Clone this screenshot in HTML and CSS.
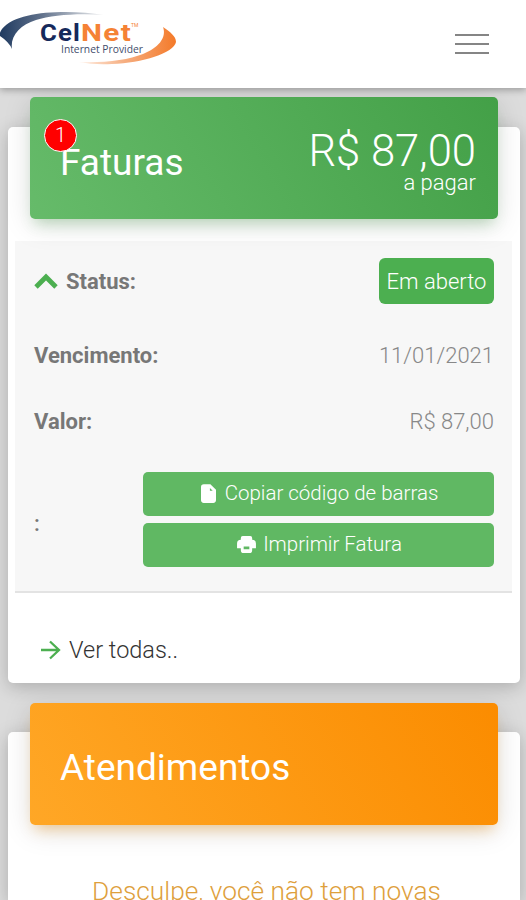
FILE: index.html
```
<!DOCTYPE html>
<html lang="pt-BR">
<head>
<meta charset="utf-8">
<title>CelNet</title>
<link rel="stylesheet" href="styles.css">
</head>
<body>
<header class="navbar">
  <svg class="logo" viewBox="0 0 190 70" role="img" aria-label="CelNet Internet Provider">
    <defs>
      <linearGradient id="navy" x1="0" x2="1"><stop offset="0" stop-color="#1f3a60"/><stop offset=".4" stop-color="#60718b"/><stop offset="1" stop-color="#f2f2f2"/></linearGradient>
      <linearGradient id="orange" x1="0" x2="1"><stop offset="0" stop-color="#fff0e6"/><stop offset=".45" stop-color="#f6b084"/><stop offset="1" stop-color="#f47a29"/></linearGradient>
    </defs>
    <path fill="url(#navy)" d="M12 49Q9 42 0 36Q-1 33 2 29C13 16 38 12 66 12Q86 12 104 15C78 13 52 15 36 20C20 25 10 36 12 49Z"/>
    <path fill="url(#orange)" d="M163 27C170 32 176 36 176 42C174 53 142 63 112 64Q94 65 79 62C105 63 128 60 143 54C158 48 167 38 163 27Z"/>
    <g class="brand">
      <text x="40" y="41" textLength="41" lengthAdjust="spacingAndGlyphs" fill="#15295b">Cel</text>
      <text x="81" y="41" textLength="51" lengthAdjust="spacingAndGlyphs" fill="#f58235">Net</text>
    </g>
    <text class="tm" x="131" y="27">TM</text>
    <text class="tagline" x="61" y="53" textLength="82" lengthAdjust="spacingAndGlyphs">Internet Provider</text>
  </svg>
  <button class="menu" aria-label="Menu"><span></span><span></span><span></span></button>
</header>
<main>
  <section class="card invoices">
    <div class="card-header green">
      <span class="badge">1</span>
      <h2>Faturas</h2>
      <div class="total"><strong>R$ 87,00</strong><span>a pagar</span></div>
    </div>
    <div class="details">
      <div class="row status">
        <b><svg class="chevron" viewBox="0 0 24 16"><path d="M2 14 12 4 22 14" fill="none" stroke="#4caf50" stroke-width="4.800"/></svg>Status:</b>
        <span class="tag">Em aberto</span>
      </div>
      <div class="row due"><b>Vencimento:</b><span class="date">11/01/2021</span></div>
      <div class="row value"><b>Valor:</b><span>R$ 87,00</span></div>
      <div class="row actions">
        <b>:</b>
        <div class="buttons">
          <button class="btn"><svg class="file" viewBox="0 0 16 20"><path fill="#fff" fill-rule="evenodd" d="M3 0H10L16 6V17Q16 20 13 20H3Q0 20 0 17V3Q0 0 3 0ZM9.500 4V7H12.500Z"/></svg><span>Copiar código de barras</span></button>
          <button class="btn"><svg class="printer" viewBox="0 0 20 18"><path fill="#fff" fill-rule="evenodd" d="M6 0H14Q16 0 16 2V4Q20 4 20 8V13H16V15Q16 18 13 18H7Q4 18 4 15V13H0V8Q0 4 4 4V2Q4 0 6 0ZM7 11V14H13V11Z"/></svg><span>Imprimir Fatura</span></button>
        </div>
      </div>
    </div>
    <a class="all"><svg class="arrow" viewBox="0 0 20 20"><path d="M0 10H18M9 1.500 18 10 9 18.500" fill="none" stroke="#4caf50" stroke-width="2.300"/></svg><span>Ver todas..</span></a>
  </section>
  <section class="card tickets">
    <div class="card-header amber"><h2>Atendimentos</h2></div>
    <p class="empty">Desculpe, você não tem novas</p>
  </section>
</main>
</body>
</html>
```
FILE: styles.css
```
* { box-sizing: border-box; }
html { overflow: hidden; height: 100%; }
body {
  margin: 0;
  height: 900px;
  overflow: hidden;
  background: #dcdcdc;
  font-family: Roboto, "Liberation Sans", sans-serif;
  font-weight: 300;
  font-size: 22px;
  color: #888;
}
.navbar {
  position: relative;
  z-index: 2;
  display: flex;
  justify-content: space-between;
  height: 88px;
  padding-right: 37px;
  background: #fff;
  box-shadow: 0 2px 7px rgba(0, 0, 0, .3);
}
.logo { width: 190px; height: 70px; }
.brand { font: 700 23px Roboto, sans-serif; letter-spacing: 1px; }
.tm { font: 400 5px Roboto, sans-serif; fill: #f58235; }
.tagline { font: 400 10.5px "Open Sans", sans-serif; fill: #3f4d6b; }
.menu {
  display: flex;
  flex-direction: column;
  gap: 7px;
  width: 34px;
  margin-top: 34px;
  padding: 0;
  border: 0;
  background: none;
}
.menu span { height: 2px; background: #858585; }
main { padding: 39px 6px 0 8px; }
.card {
  background: #fff;
  border-radius: 5px;
  box-shadow: 0 4px 18px rgba(0, 0, 0, .22);
}
.invoices { height: 556px; margin-bottom: 49px; }
.tickets { height: 168px; border-radius: 5px 5px 0 0; }
.card-header {
  position: relative;
  top: -30px;
  display: flex;
  justify-content: space-between;
  height: 122px;
  margin: 0 22px -8px;
  padding: 0 22px 0 30px;
  border-radius: 5px;
  color: #fff;
}
.green {
  background: linear-gradient(60deg, #66bb6a, #43a047);
  box-shadow: 0 6px 28px rgba(0, 0, 0, .13), 0 9px 13px -5px rgba(76, 175, 80, .3);
}
.amber {
  top: -29px;
  background: linear-gradient(60deg, #ffa726, #fb8c00);
  box-shadow: 0 6px 28px rgba(0, 0, 0, .13), 0 9px 13px -5px rgba(255, 152, 0, .35);
}
h2 { margin: 43px 0 0; font-size: 37px; line-height: 44px; font-weight: 400; }
.green h2 { margin-top: 44px; }
.badge {
  position: absolute;
  left: 14px;
  top: 22px;
  z-index: 1;
  width: 33px;
  height: 33px;
  border: 1.5px solid #fff;
  border-radius: 50%;
  background: #f00;
  font-size: 20px;
  line-height: 30px;
  text-align: center;
}
.total { display: flex; flex-direction: column; align-items: flex-end; }
.total strong { margin-top: 29px; font-size: 43.6px; font-weight: 300; line-height: 52px; }
.total span { line-height: 26px; margin-top: -8px; }
.details {
  height: 352px;
  margin: 0 8px 0 7px;
  padding: 17px 18px 0 19px;
  background: #f7f7f7;
  border-bottom: 2px solid #e3e3e3;
}
.row { display: flex; align-items: center; justify-content: space-between; }
b { font-weight: 700; color: #777; }
.status { height: 46px; }
.chevron { width: 24px; height: 16px; margin-right: 8px; }
.tag {
  width: 115px;
  height: 46px;
  border-radius: 6px;
  background: #4caf50;
  color: #fff;
  line-height: 47px;
  text-align: center;
}
.due { height: 60px; margin-top: 21px; }
.value { height: 60px; margin-top: 6px; }
.actions { height: 95px; margin-top: 21px; }
.actions b { padding-top: 8px; font-weight: 500; }
.buttons { display: flex; flex-direction: column; gap: 7px; width: 351px; }
.btn {
  display: flex;
  align-items: center;
  justify-content: center;
  height: 44px;
  padding: 0 0 2px 2px;
  border: 0;
  border-radius: 5px;
  background: #60b863;
  color: #fff;
  font: inherit;
  font-size: 20.5px;
}
.file { width: 15px; height: 19px; margin-right: 9px; }
.printer { width: 19px; height: 17px; margin-right: 7px; }
.all { display: flex; align-items: center; height: 60px; margin-top: 27px; padding-left: 33px; color: #333; font-size: 23.5px; }
.arrow { width: 20px; height: 20px; margin-right: 8px; }
.empty { margin: 30px 0 0; padding-left: 5px; color: #dea03c; font-size: 26.3px; line-height: 30px; text-align: center; white-space: nowrap; }
```
